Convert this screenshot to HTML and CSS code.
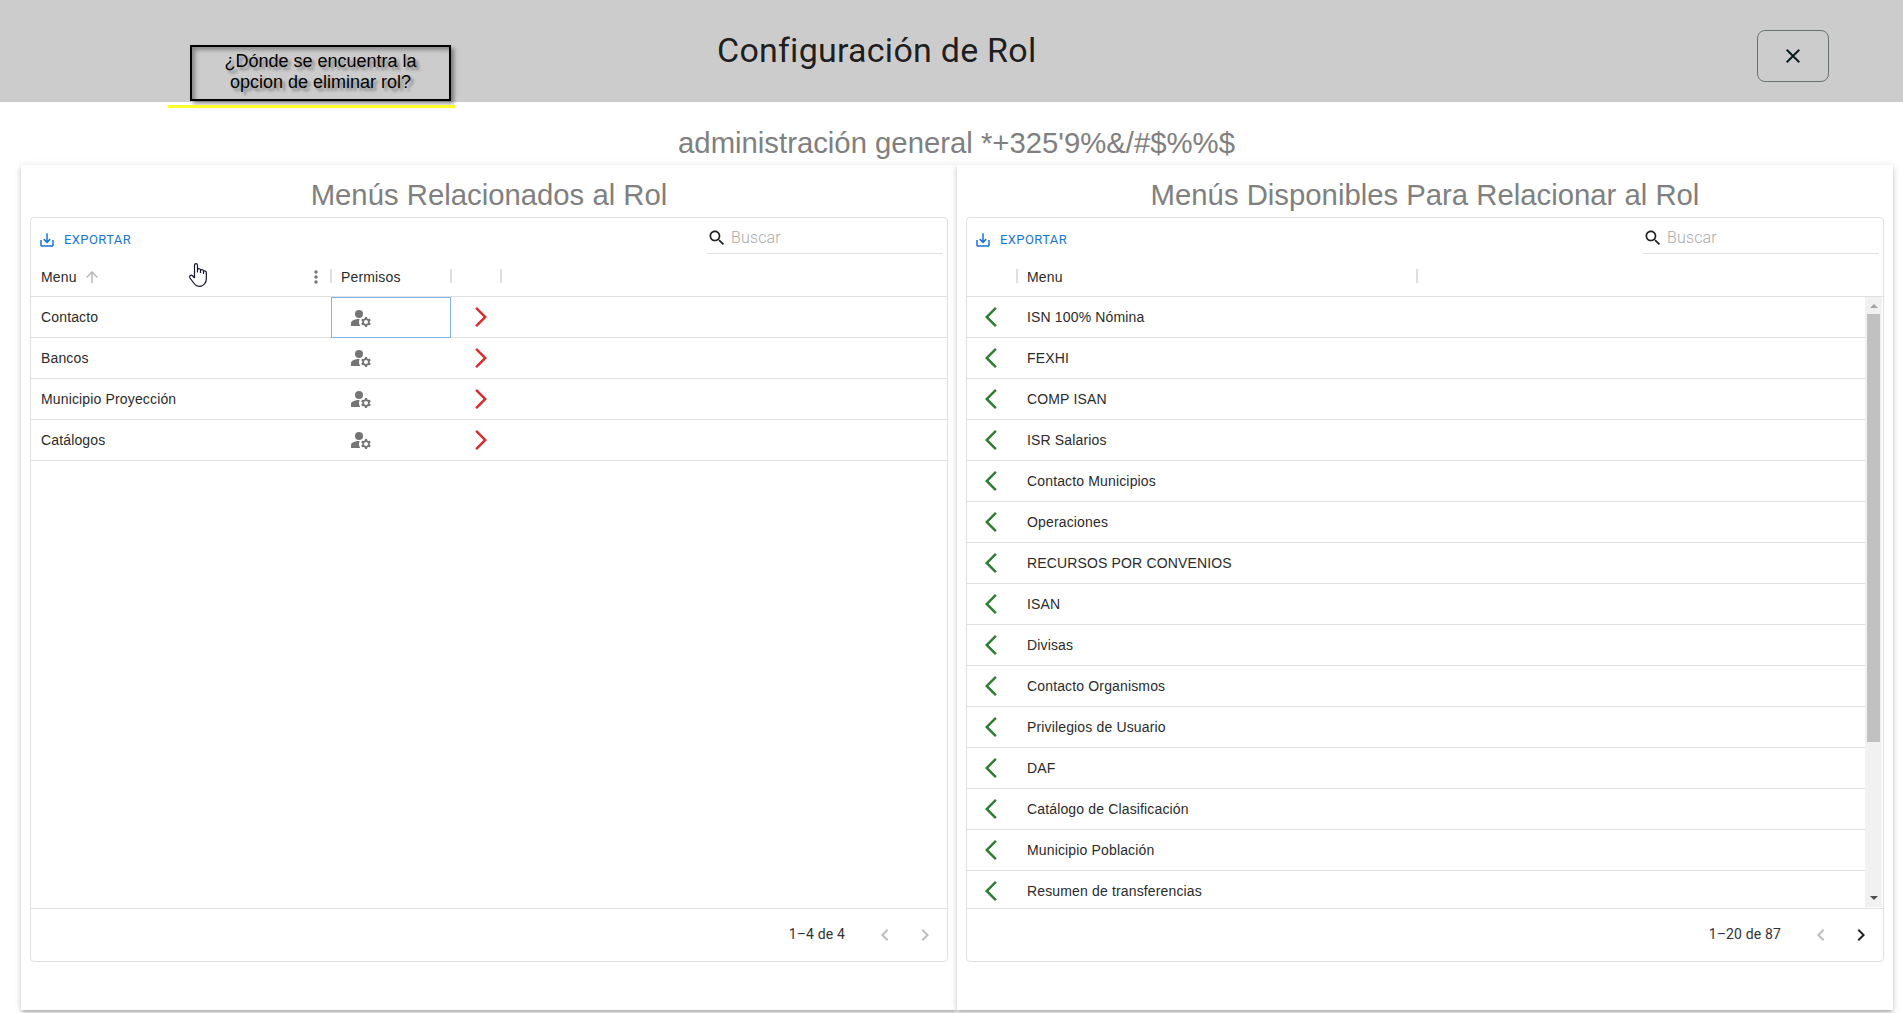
FILE: index.html
```html
<!DOCTYPE html>
<html lang="es">
<head>
<meta charset="utf-8">
<title>Configuración de Rol</title>
<link rel="stylesheet" href="styles.css">
</head>
<body>
<svg class="defs" width="0" height="0">
  <symbol id="close" viewBox="0 0 24 24"><path d="M19 6.41 17.59 5 12 10.59 6.41 5 5 6.41 10.59 12 5 17.59 6.41 19 12 13.41 17.59 19 19 17.59 13.41 12z"/></symbol>
  <symbol id="save" viewBox="0 0 24 24"><path d="M19 12v7H5v-7H3v7c0 1.1.9 2 2 2h14c1.1 0 2-.9 2-2v-7h-2zm-6 .67 2.59-2.58L17 11.5l-5 5-5-5 1.41-1.41L11 12.67V3h2z"/></symbol>
  <symbol id="search" viewBox="0 0 24 24"><path d="M15.5 14h-.79l-.28-.27C15.41 12.59 16 11.11 16 9.5 16 5.91 13.09 3 9.5 3S3 5.91 3 9.5 5.91 16 9.5 16c1.61 0 3.09-.59 4.23-1.57l.27.28v.79l5 4.99L20.49 19l-4.99-5zm-6 0C7.01 14 5 11.99 5 9.5S7.01 5 9.5 5 14 7.01 14 9.5 11.99 14 9.5 14z"/></symbol>
  <symbol id="up" viewBox="0 0 24 24"><path d="m4 12 1.41 1.41L11 7.83V20h2V7.83l5.58 5.59L20 12l-8-8-8 8z"/></symbol>
  <symbol id="more" viewBox="0 0 24 24"><path d="M12 8c1.1 0 2-.9 2-2s-.9-2-2-2-2 .9-2 2 .9 2 2 2zm0 2c-1.100 0-2 .9-2 2s.9 2 2 2 2-.9 2-2-.9-2-2-2zm0 6c-1.100 0-2 .9-2 2s.9 2 2 2 2-.9 2-2-.9-2-2-2z"/></symbol>
  <symbol id="manage" viewBox="0 0 24 24"><circle cx="10" cy="8" r="4"/><path d="M10.67 13.020C10.450 13.010 10.230 13 10 13c-2.420 0-4.680.67-6.610 1.820-.88.52-1.390 1.500-1.390 2.530V20h9.260c-.79-1.130-1.260-2.510-1.260-4 0-1.070.25-2.070.67-2.980zM20.750 16c0-.22-.03-.42-.06-.63l1.140-1.010-1-1.730-1.450.49c-.32-.27-.68-.48-1.080-.63L18 11h-2l-.3 1.490c-.4.15-.76.36-1.080.63l-1.450-.49-1 1.730 1.140 1.010c-.03.21-.06.41-.06.63s.03.42.06.63l-1.140 1.010 1 1.730 1.450-.49c.32.27.68.48 1.080.63L16 21h2l.3-1.490c.4-.15.76-.36 1.080-.63l1.450.49 1-1.730-1.140-1.010c.03-.21.06-.41.06-.63zM17 18c-1.100 0-2-.9-2-2s.9-2 2-2 2 .9 2 2-.9 2-2 2z"/></symbol>
  <symbol id="remove" viewBox="0 0 24 24"><path d="M6.230 20.230 8 22l10-10L8 2 6.230 3.770 14.460 12z"/></symbol>
  <symbol id="add" viewBox="0 0 24 24"><path d="M17.770 3.770 16 2 6 12l10 10 1.770-1.770L9.540 12z"/></symbol>
  <symbol id="prev" viewBox="0 0 24 24"><path d="M15.410 16.590 10.830 12l4.580-4.590L14 6l-6 6 6 6z"/></symbol>
  <symbol id="next" viewBox="0 0 24 24"><path d="M8.590 16.590 13.170 12 8.590 7.410 10 6l6 6-6 6z"/></symbol>
</svg>

<header class="appbar">
  <h1>Configuración de Rol</h1>
  <button class="close"><svg class="i24"><use href="#close"/></svg></button>
</header>
<div class="note">¿Dónde se encuentra la<br>opcion de eliminar rol?</div>
<div class="marker"></div>

<h2 class="role">administración general *+325'9%&amp;/#$%%$</h2>

<main class="panels">
  <section class="card">
    <h3>Menús Relacionados al Rol</h3>
    <div class="grid">
      <div class="toolbar">
        <button class="export"><svg class="i18"><use href="#save"/></svg>EXPORTAR</button>
        <label class="search"><svg class="i20"><use href="#search"/></svg><span>Buscar</span></label>
      </div>
      <div class="row head left-cols">
        <div class="cell sep">Menu<svg class="i18 sort"><use href="#up"/></svg><svg class="i20 menu"><use href="#more"/></svg></div>
        <div class="cell sep">Permisos</div>
        <div class="cell sep"></div>
      </div>
      <div class="body">
        <div class="row left-cols"><div class="cell">Contacto</div><div class="cell perm focus"><svg class="i24"><use href="#manage"/></svg></div><div class="cell red"><svg class="i24"><use href="#remove"/></svg></div></div>
        <div class="row left-cols"><div class="cell">Bancos</div><div class="cell perm"><svg class="i24"><use href="#manage"/></svg></div><div class="cell red"><svg class="i24"><use href="#remove"/></svg></div></div>
        <div class="row left-cols"><div class="cell">Municipio Proyección</div><div class="cell perm"><svg class="i24"><use href="#manage"/></svg></div><div class="cell red"><svg class="i24"><use href="#remove"/></svg></div></div>
        <div class="row left-cols"><div class="cell">Catálogos</div><div class="cell perm"><svg class="i24"><use href="#manage"/></svg></div><div class="cell red"><svg class="i24"><use href="#remove"/></svg></div></div>
      </div>
      <div class="footer"><span>1–4 de 4</span><svg class="i24 off"><use href="#prev"/></svg><svg class="i24 off"><use href="#next"/></svg></div>
    </div>
  </section>

  <section class="card">
    <h3>Menús Disponibles Para Relacionar al Rol</h3>
    <div class="grid">
      <div class="toolbar">
        <button class="export"><svg class="i18"><use href="#save"/></svg>EXPORTAR</button>
        <label class="search"><svg class="i20"><use href="#search"/></svg><span>Buscar</span></label>
      </div>
      <div class="row head right-cols">
        <div class="cell sep"></div>
        <div class="cell sep">Menu</div>
      </div>
      <div class="body scrolls">
        <div class="rows">
          <div class="row right-cols"><div class="cell green"><svg class="i24"><use href="#add"/></svg></div><div class="cell">ISN 100% Nómina</div></div>
          <div class="row right-cols"><div class="cell green"><svg class="i24"><use href="#add"/></svg></div><div class="cell">FEXHI</div></div>
          <div class="row right-cols"><div class="cell green"><svg class="i24"><use href="#add"/></svg></div><div class="cell">COMP ISAN</div></div>
          <div class="row right-cols"><div class="cell green"><svg class="i24"><use href="#add"/></svg></div><div class="cell">ISR Salarios</div></div>
          <div class="row right-cols"><div class="cell green"><svg class="i24"><use href="#add"/></svg></div><div class="cell">Contacto Municipios</div></div>
          <div class="row right-cols"><div class="cell green"><svg class="i24"><use href="#add"/></svg></div><div class="cell">Operaciones</div></div>
          <div class="row right-cols"><div class="cell green"><svg class="i24"><use href="#add"/></svg></div><div class="cell">RECURSOS POR CONVENIOS</div></div>
          <div class="row right-cols"><div class="cell green"><svg class="i24"><use href="#add"/></svg></div><div class="cell">ISAN</div></div>
          <div class="row right-cols"><div class="cell green"><svg class="i24"><use href="#add"/></svg></div><div class="cell">Divisas</div></div>
          <div class="row right-cols"><div class="cell green"><svg class="i24"><use href="#add"/></svg></div><div class="cell">Contacto Organismos</div></div>
          <div class="row right-cols"><div class="cell green"><svg class="i24"><use href="#add"/></svg></div><div class="cell">Privilegios de Usuario</div></div>
          <div class="row right-cols"><div class="cell green"><svg class="i24"><use href="#add"/></svg></div><div class="cell">DAF</div></div>
          <div class="row right-cols"><div class="cell green"><svg class="i24"><use href="#add"/></svg></div><div class="cell">Catálogo de Clasificación</div></div>
          <div class="row right-cols"><div class="cell green"><svg class="i24"><use href="#add"/></svg></div><div class="cell">Municipio Población</div></div>
          <div class="row right-cols"><div class="cell green"><svg class="i24"><use href="#add"/></svg></div><div class="cell">Resumen de transferencias</div></div>
        </div>
        <div class="scrollbar"><i class="arrow-up"></i><b class="thumb"></b><i class="arrow-down"></i></div>
      </div>
      <div class="footer"><span>1–20 de 87</span><svg class="i24 off"><use href="#prev"/></svg><svg class="i24"><use href="#next"/></svg></div>
    </div>
  </section>
</main>

<svg class="pointer" viewBox="0 0 18 24"><path d="M5.500 15V2.500Q5.500.7 7 .7T8.500 2.500V9.500V6.700Q9 5.300 10.300 5.700T11.500 7V10V7.500Q12.300 6.300 13.400 6.800T14.500 8V11V8.500Q15.200 7.400 16.300 8T17.300 9.500V16Q17.300 19 15.800 20.500Q14 23.300 10.500 23.300Q7 23.300 5.500 21L1 15Q.2 13.300 1.200 12.500T3.600 12.800L5.500 15"/></svg>
</body>
</html>
```
FILE: styles.css
```css
* { box-sizing: border-box; }
body {
  margin: 0;
  height: 1013px;
  overflow: hidden;
  background: #fff;
  color: rgba(0, 0, 0, .87);
  font: 400 14px/20px Roboto, sans-serif;
  letter-spacing: .15px;
}
h1, h2, h3 { margin: 0; font-weight: 400; }
button { border: 0; background: none; padding: 0; font: inherit; color: inherit; }
svg { display: block; flex: none; fill: currentColor; }
.defs { position: absolute; }
.i18 { width: 18px; height: 18px; }
.i20 { width: 20px; height: 20px; }
.i24 { width: 24px; height: 24px; }

.appbar {
  display: flex;
  justify-content: flex-end;
  height: 102px;
  padding: 30px 74px 0 0;
  background: #ccc;
}
.appbar h1 {
  width: 1040px;
  font-size: 34px;
  line-height: 40px;
  letter-spacing: .25px;
}
.close {
  display: flex;
  align-items: center;
  justify-content: center;
  width: 72px;
  height: 52px;
  border: 1px solid #677171;
  border-radius: 8px;
  color: #0b1c1f;
}
.note {
  position: absolute;
  left: 190px;
  top: 45px;
  width: 261px;
  height: 56px;
  padding-top: 4px;
  border: 2px solid #000;
  box-shadow: 3px 3px 4px rgba(0, 0, 0, .4), inset 3px 3px 4px rgba(0, 0, 0, .35);
  color: #000;
  font: 18px/21px "Liberation Sans", Arial, sans-serif;
  letter-spacing: 0;
  text-align: center;
  text-shadow: 3px 3px 3px rgba(0, 0, 0, .4);
}
.marker {
  position: absolute;
  left: 168px;
  top: 105px;
  width: 287px;
  height: 3px;
  background: #ffff2b;
}
.role, .card h3 {
  color: #808080;
  font-family: "Liberation Sans", Arial, sans-serif;
  font-size: 29.3px;
  letter-spacing: 0;
  text-align: center;
}
.role { height: 63px; padding: 23px 0 0 10px; line-height: 36px; }

.panels { display: grid; grid-template-columns: 936px 936px; padding-left: 21px; }
.card {
  height: 845px;
  padding: 12px 9px 0;
  background: #fff;
  box-shadow: 0 3px 3px -2px rgba(0,0,0,.2), 0 3px 4px 0 rgba(0,0,0,.14), 0 1px 8px 0 rgba(0,0,0,.12);
}
.card h3 { height: 40px; line-height: 36px; }
.grid {
  display: flex;
  flex-direction: column;
  height: 745px;
  border: 1px solid #e0e0e0;
  border-radius: 4px;
}
.toolbar { display: flex; justify-content: space-between; height: 37px; padding: 0 4px 0 7px; }
.export {
  display: flex;
  align-items: center;
  gap: 8px;
  height: 30px;
  margin-top: 7px;
  color: #1976d2;
  font-size: 13px;
  letter-spacing: .4px;
}
.search {
  display: flex;
  width: 236px;
  height: 36px;
  padding: 10px 0 0 0;
  border-bottom: 1px solid #e0e0e0;
  font-size: 16px;
}
.search span { margin-left: 4px; color: #aaa; font-weight: 300; }
.row { display: grid; height: 41px; border-bottom: 1px solid #e0e0e0; }
.left-cols { grid-template-columns: 300px 120px 50px; }
.right-cols { grid-template-columns: 50px 400px; }
.cell {
  display: flex;
  align-items: center;
  padding-left: 10px;
  color: #2b2b2b;
  font-family: "Liberation Sans", Arial, sans-serif;
}
.head { height: 42px; padding-top: 2px; }
.sep { position: relative; }
.sep::after {
  content: "";
  position: absolute;
  right: -1px;
  top: 12px;
  width: 2px;
  height: 14px;
  background: #e0e0e0;
}
.sort { margin-left: 6px; color: #b8b8b8; }
.menu { margin-left: auto; margin-right: 5px; color: #757575; }
.perm { padding-left: 18px; color: #757575; }
.focus { margin-bottom: -1px; border: 1px solid #84b3e5; padding-left: 17px; }
.red { padding-left: 18px; color: #d32f2f; }
.green { padding-left: 12px; color: #2e7d32; }
.body { flex: 1; min-height: 0; overflow: hidden; }
.scrolls { display: flex; padding-right: 1px; }
.rows { flex: 1; }
.scrollbar {
  display: flex;
  flex-direction: column;
  align-items: center;
  width: 17px;
  height: 610px;
  padding: 7px 0;
  background: #f1f1f1;
}
.arrow-up { border: 4px solid transparent; border-top: 0; border-bottom-color: #a3a3a3; }
.arrow-down { margin-top: auto; border: 4px solid transparent; border-bottom: 0; border-top-color: #505050; }
.thumb { width: 13px; height: 428px; margin-top: 6px; background: #c1c1c1; }
.footer {
  display: flex;
  align-items: center;
  justify-content: flex-end;
  gap: 16px;
  height: 53px;
  padding: 0 10px 1px 0;
  border-top: 1px solid #e0e0e0;
}
.footer span { margin: 0 12px 2px 0; color: #333; }
.off { color: #bdbdbd; }
.pointer {
  position: absolute;
  left: 189px;
  top: 263px;
  width: 18px;
  height: 24px;
  fill: #fff;
  stroke: #15152b;
  stroke-width: 1.2;
}
```
